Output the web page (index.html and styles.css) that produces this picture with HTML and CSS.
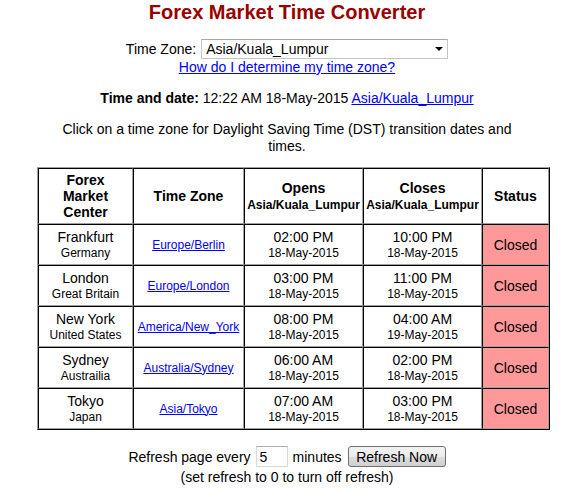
FILE: index.html
```html
<!DOCTYPE html>
<html lang="en">
<head>
    <meta charset="UTF-8">
    <title>Forex Market Time Converter</title>
    <link rel="stylesheet" href="styles.css">
</head>
<body>
    <h1>Forex Market Time Converter</h1>

    <!-- time zone picker -->
    <div class="tz-line">
        <label for="tz">Time Zone:</label>
        <span class="select-wrap">
            <select id="tz">
                <option>Asia/Kuala_Lumpur</option>
            </select>
        </span>
    </div>
    <div class="help"><a href="#">How do I determine my time zone?</a></div>

    <p class="now"><b>Time and date:</b> 12:22 AM 18-May-2015 <a href="#">Asia/Kuala_Lumpur</a></p>

    <p class="note">Click on a time zone for Daylight Saving Time (DST) transition dates and times.</p>

    <!-- market table -->
    <table class="markets">
        <thead>
            <tr>
                <th class="c1">Forex<br>Market<br>Center</th>
                <th class="c2">Time Zone</th>
                <th class="c3">Opens<br><span class="sub">Asia/Kuala_Lumpur</span></th>
                <th class="c4">Closes<br><span class="sub">Asia/Kuala_Lumpur</span></th>
                <th class="c5">Status</th>
            </tr>
        </thead>
        <tbody>
            <tr>
                <td><span class="big">Frankfurt</span><span class="small">Germany</span></td>
                <td><a href="#">Europe/Berlin</a></td>
                <td><span class="big">02:00 PM</span><span class="small">18-May-2015</span></td>
                <td><span class="big">10:00 PM</span><span class="small">18-May-2015</span></td>
                <td class="closed">Closed</td>
            </tr>
            <tr>
                <td><span class="big">London</span><span class="small">Great Britain</span></td>
                <td><a href="#">Europe/London</a></td>
                <td><span class="big">03:00 PM</span><span class="small">18-May-2015</span></td>
                <td><span class="big">11:00 PM</span><span class="small">18-May-2015</span></td>
                <td class="closed">Closed</td>
            </tr>
            <tr>
                <td><span class="big">New York</span><span class="small">United States</span></td>
                <td><a href="#">America/New_York</a></td>
                <td><span class="big">08:00 PM</span><span class="small">18-May-2015</span></td>
                <td><span class="big">04:00 AM</span><span class="small">19-May-2015</span></td>
                <td class="closed">Closed</td>
            </tr>
            <tr>
                <td><span class="big">Sydney</span><span class="small">Austrailia</span></td>
                <td><a href="#">Australia/Sydney</a></td>
                <td><span class="big">06:00 AM</span><span class="small">18-May-2015</span></td>
                <td><span class="big">02:00 PM</span><span class="small">18-May-2015</span></td>
                <td class="closed">Closed</td>
            </tr>
            <tr>
                <td><span class="big">Tokyo</span><span class="small">Japan</span></td>
                <td><a href="#">Asia/Tokyo</a></td>
                <td><span class="big">07:00 AM</span><span class="small">18-May-2015</span></td>
                <td><span class="big">03:00 PM</span><span class="small">18-May-2015</span></td>
                <td class="closed">Closed</td>
            </tr>
        </tbody>
    </table>

    <!-- auto refresh -->
    <div class="refresh">
        <span>Refresh page every</span>
        <input type="text" class="minutes" value="5">
        <span>minutes</span>
        <button type="button">Refresh Now</button>
    </div>
    <div class="refresh-note">(set refresh to 0 to turn off refresh)</div>
</body>
</html>
```

FILE: styles.css
```css
body {
    margin: 0;
    padding-top: 1px;
    font-family: "Liberation Sans", Arial, sans-serif;
    font-size: 14px;
    line-height: 16px;
    color: #000;
    background-color: #fff;
    text-align: center;
}
a {
    color: #0000ff;
}
h1 {
    margin: 0;
    font-size: 20px;
    line-height: 23px;
    color: #990000;
}
.tz-line {
    display: flex;
    justify-content: center;
    align-items: center;
    gap: 5px;
    margin-top: 15px;
}
.select-wrap {
    position: relative;
    display: block;
}
.select-wrap select {
    appearance: none;
    -webkit-appearance: none;
    display: block;
    width: 247px;
    height: 20px;
    margin: 0;
    padding: 0 0 0 4px;
    border: 1px solid #c5c5c5;
    border-top-color: #a8a8a8;
    border-radius: 0;
    background-color: #fff;
    font-family: "Liberation Sans", Arial, sans-serif;
    font-size: 14px;
    color: #000;
}
.select-wrap::after {
    content: "";
    position: absolute;
    right: 5px;
    top: 8px;
    border-left: 4px solid transparent;
    border-right: 4px solid transparent;
    border-top: 4px solid #000;
    pointer-events: none;
}
.help {
    margin: 0;
}
.now {
    margin: 15px 0 0;
}
.note {
    width: 480px;
    margin: 15px auto 0;
    line-height: 17px;
}
.markets {
    table-layout: fixed;
    width: 513px;
    margin: 12px 0 0 37px;
    border-collapse: separate;
    border-spacing: 0;
    border: 1px solid;
    border-color: #a0a0a0 #000 #000 #a0a0a0;
}
.markets th, .markets td {
    border: 1px solid;
    border-color: #000 #a0a0a0 #a0a0a0 #000;
    text-align: center;
    vertical-align: middle;
}
.markets th {
    padding: 3px 1px;
    font-size: 14px;
    line-height: 16px;
    font-weight: bold;
}
.markets th .sub {
    font-size: 12px;
}
.markets td {
    padding: 4px 1px;
    font-size: 12px;
    line-height: 14px;
}
.c1 { width: 91px; }
.c2 { width: 107px; }
.c3 { width: 115px; }
.c4 { width: 115px; }
.c5 { width: 63px; }
.big {
    display: block;
    font-size: 14px;
    line-height: 17px;
}
.small {
    display: block;
}
td.closed {
    background-color: #ff9999;
    font-size: 14px;
}
.refresh {
    display: flex;
    justify-content: center;
    align-items: center;
    gap: 5px;
    margin-top: 16px;
}
.refresh .minutes {
    width: 32px;
    height: 21px;
    box-sizing: border-box;
    margin: 0;
    padding: 0 3px;
    border: 1px solid #d5d8dd;
    border-top-color: #abadb3;
    font-family: "Liberation Sans", Arial, sans-serif;
    font-size: 14px;
}
.refresh button {
    height: 21px;
    width: 98px;
    margin: 0 0 0 1px;
    padding: 0;
    border: 1px solid #707070;
    border-radius: 3px;
    background: linear-gradient(#f2f2f2, #ebebeb 50%, #dddddd 51%, #cfcfcf);
    font-family: "Liberation Sans", Arial, sans-serif;
    font-size: 14px;
    color: #000;
}
.refresh-note {
    margin-top: 2px;
}
```
